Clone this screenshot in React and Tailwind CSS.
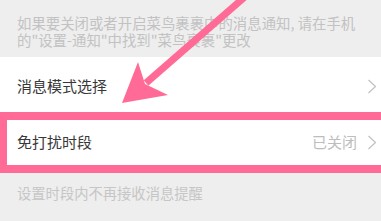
import React from 'react';

const PINK = '#ff6b96';

function Chevron() {
  return (
    <svg width="10" height="15" viewBox="0 0 10 15" fill="none" className="shrink-0">
      <path d="M1.5 1 L8.5 7.5 L1.5 14" stroke="#c4c4c4" strokeWidth="1.3" strokeLinejoin="round" />
    </svg>
  );
}

export default function App() {
  return (
    <div className="relative w-[381px] h-[221px] overflow-hidden bg-[#eeeeee] font-['Noto_Sans_CJK_SC',sans-serif]">
      {/* 提示说明 */}
      <div className="h-[57px] px-[17px] pt-[14px] text-[14.4px] leading-[17px] text-[#c2c2c2]">
        {'如果要关闭或者开启菜鸟裹裹中的消息通知, 请在手机'}
        <br />
        {'的"设置-通知"中找到"菜鸟裹裹"更改'}
      </div>

      {/* 设置列表 */}
      <div className="bg-white">
        <div className="h-[55px] flex items-center justify-between pl-[17px] pr-[4px] pt-[4px]">
          <span className="text-[15px] text-[#383838]">消息模式选择</span>
          <Chevron />
        </div>
        <div className="h-[61px] flex items-center justify-between pl-[10px] pr-[4px] border-t-[8px] border-b-[8px] border-l-[7px] border-[#ff6b96]">
          <span className="text-[15px] text-[#383838]">免打扰时段</span>
          <div className="flex items-center gap-[10px]">
            <span className="text-[15px] text-[#bdbdbd]">已关闭</span>
            <Chevron />
          </div>
        </div>
      </div>

      <div className="px-[17px] pt-[11px] text-[14.3px] leading-[17px] text-[#c6c6c6]">
        设置时段内不再接收消息提醒
      </div>

      {/* 标注箭头 */}
      <svg className="absolute inset-0 pointer-events-none" width="381" height="221" viewBox="0 0 381 221">
        <line x1="247" y1="-5" x2="146" y2="83" stroke={PINK} strokeWidth="7" />
        <polygon points="122,103 138,62 145,84 168,95" fill={PINK} />
      </svg>
    </div>
  );
}
